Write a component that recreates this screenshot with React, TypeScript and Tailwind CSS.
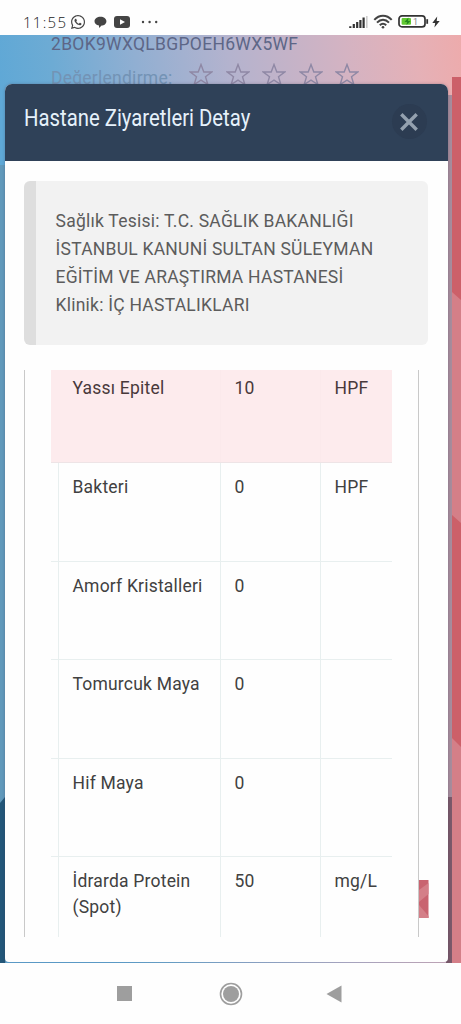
import { FaWhatsapp } from "react-icons/fa"

const results = [
  { id: 1, name: "Yassı Epitel", value: "10", unit: "HPF", abnormal: true },
  { id: 2, name: "Bakteri", value: "0", unit: "HPF" },
  { id: 3, name: "Amorf Kristalleri", value: "0", unit: "" },
  { id: 4, name: "Tomurcuk Maya", value: "0", unit: "" },
  { id: 5, name: "Hif Maya", value: "0", unit: "" },
  { id: 6, name: "İdrarda Protein (Spot)", value: "50", unit: "mg/L" },
]

function StatusBar() {
  return (
    <div className="flex h-[35px] shrink-0 items-start justify-between bg-[#fefefe] text-[#444]">
      <div className="flex items-center pt-[13px] pl-[23px]">
        <span className="w-[47px] font-['Open_Sans',sans-serif] text-[15px] leading-[18px] font-light tracking-[1.3px] text-[#222]">
          11:55
        </span>
        <FaWhatsapp className="h-4 w-4" />
        <svg className="ml-[8px] h-[13px] w-[13px]" viewBox="0 0 13 13">
          <path d="M6.5 0.8C9.8 0.8 12.4 2.7 12.4 5.2C12.4 8 10 9.6 7.6 9.6L5 12V9.4C2.2 9 .5 7.4 .5 5.2C.5 2.7 3.2 .8 6.5 .8Z" fill="#444" />
        </svg>
        <svg className="ml-[7px] h-[12px] w-[16px]" viewBox="0 0 16 12">
          <rect width="16" height="12" rx="3" fill="#444" />
          <path d="M6 3.2L11 6L6 8.8Z" fill="#fff" />
        </svg>
        <svg className="ml-[11px] h-[4px] w-[18px]" viewBox="0 0 18 4">
          <circle cx="2" cy="2" r="1.2" fill="#444" />
          <circle cx="8.6" cy="2" r="1.2" fill="#444" />
          <circle cx="15.2" cy="2" r="1.2" fill="#444" />
        </svg>
      </div>

      <div className="flex items-center pt-[14px] pr-[21px]">
        <svg className="h-[15px] w-[21px]" viewBox="0 0 21 15">
          <path d="M2.3 12.2V14M5.8 10V14M9.2 8V14M12.4 6V14M15.6 3.5V14" stroke="#333" strokeWidth="2.2" />
          <path d="M18.8 2V14" stroke="#ccc" strokeWidth="1.6" />
        </svg>
        <svg className="ml-[4px] h-[15px] w-[20px]" viewBox="0 0 20 15" fill="none" stroke="#444" strokeWidth="2">
          <path d="M1.3 5.8C6.3 .3 13.7 .3 18.7 5.8" />
          <path d="M4 8.6C7.6 4.7 12.4 4.7 16 8.6" />
          <path d="M6.8 11.3C8.9 9.1 11.1 9.1 13.2 11.3" />
          <circle cx="10" cy="13.2" r="1.3" fill="#444" stroke="none" />
        </svg>
        <svg className="ml-[5px] h-[15px] w-[31px]" viewBox="0 0 31 15">
          <rect x="1" y="1.9" width="26" height="11" rx="3" fill="#fff" stroke="#333" strokeWidth="1.7" />
          <path d="M29.2 5.2V9.8" stroke="#333" strokeWidth="1.8" />
          <rect x="3.6" y="4" width="9.4" height="6.8" rx="1" fill="#62c932" />
          <path d="M10.5 3.5L6.5 8H9L8.5 11L12.5 7H10Z" fill="#258a1f" />
          <text x="15" y="10.6" fontSize="9" fontFamily="Roboto, sans-serif" fill="#888">1</text>
        </svg>
        <svg className="ml-[3px] h-[12px] w-[8px]" viewBox="0 0 8 12">
          <path d="M5.2 .5L.3 7H3.2L2.4 11.6L7.7 4.9H4.7Z" fill="#333" />
        </svg>
      </div>
    </div>
  )
}

function Star() {
  return (
    <svg className="h-[24px] w-[24px]" viewBox="0 0 24 24" fill="none" stroke="#8f88a5" strokeWidth="1.4">
      <path d="M12 1.5L14.8 9H22.7L16.5 13.8L18.8 21.5L12 17.1L5.2 21.5L7.5 13.8L1.3 9H9.2Z" />
    </svg>
  )
}

// Tinted artwork of the page that stays visible at the edges of the dialog
function Backdrop() {
  return (
    <svg className="absolute inset-0 h-full w-full" viewBox="0 0 461 928" preserveAspectRatio="none">
      <defs>
        <linearGradient id="sky" gradientUnits="userSpaceOnUse" x1="0" y1="60" x2="461" y2="0">
          <stop offset="0" stopColor="#5fa8d6" />
          <stop offset="0.12" stopColor="#6dabd4" />
          <stop offset="0.3" stopColor="#91afd2" />
          <stop offset="0.5" stopColor="#b4b3ce" />
          <stop offset="0.75" stopColor="#d4b3c2" />
          <stop offset="0.9" stopColor="#e5b1b7" />
          <stop offset="1" stopColor="#edabac" />
        </linearGradient>
      </defs>
      <rect width="461" height="928" fill="url(#sky)" />
      <rect y="130" width="6" height="798" fill="#6199bb" />
      <path d="M0 768L5 762V928H0Z" fill="#235779" />
      <rect x="446" y="60" width="6" height="868" fill="#a68c9c" />
      <rect x="446" y="762" width="6" height="166" fill="#79596a" />
      <rect x="452" y="42" width="9" height="886" fill="#d47f88" />
      <path d="M452 42H461V265L452 257Z" fill="#cc6069" />
      <path d="M452 480L461 488V712L452 703Z" fill="#cc6069" />
    </svg>
  )
}

function DetailDialog() {
  return (
    <div className="absolute top-[49px] left-[5px] flex h-[878px] w-[442.5px] flex-col overflow-hidden rounded-t-[7px] rounded-b-[4px] bg-[#fefefe] shadow-[0_0_3px_rgba(60,50,80,0.35)]">
      <div className="flex h-[76.5px] shrink-0 items-start justify-between bg-[#2f4158] pr-[21px] pl-[19px]">
        <h1 className="mt-[20px] origin-left scale-x-[0.883] text-[23px] leading-[30px] whitespace-nowrap text-[#e6f1fb]">
          Hastane Ziyaretleri Detay
        </h1>
        <button className="mt-[20px] flex h-[35px] w-[35px] shrink-0 items-center justify-center rounded-full bg-[#2c3c52]">
          <svg className="h-[18px] w-[18px]" viewBox="0 0 18 18" stroke="#94a1af" strokeWidth="3.4">
            <path d="M1.3 1.3L16.7 16.7M16.7 1.3L1.3 16.7" />
          </svg>
        </button>
      </div>

      <div className="mt-[20.5px] ml-[18.5px] h-[164px] w-[404.5px] shrink-0 rounded-[6px] border-l-[12.5px] border-[#dedede] bg-[#f2f2f2] pt-[26px] pl-[20px] text-[17.5px] leading-[28.1px] tracking-[0.24px] whitespace-nowrap text-[#5c5c5c]">
        <p>Sağlık Tesisi: T.C. SAĞLIK BAKANLIĞI</p>
        <p>İSTANBUL KANUNİ SULTAN SÜLEYMAN</p>
        <p>EĞİTİM VE ARAŞTIRMA HASTANESİ</p>
        <p>Klinik: İÇ HASTALIKLARI</p>
      </div>

      <div className="mt-[25px] flex h-[567px] shrink-0 pl-[19px]">
        <div className="w-[395px] overflow-hidden border-x border-[#c9c9c9] pl-[26px]">
          <div className="w-[341px]">
            {results.map((row) => (
              <div
                key={row.id}
                className={
                  row.abnormal
                    ? "flex h-[93px] border-b border-[#eee4e6] bg-[#fdebed] text-[#49393b]"
                    : "flex h-[98.6px] border-b border-[#e8efef] text-[#414141]"
                }
              >
                <div className={row.abnormal ? "w-[8px] border-r border-[#fdebed]" : "w-[8px] border-r border-[#e8efef]"} />
                <div className={row.abnormal ? "w-[162px] border-r border-[#fbe9eb] pt-[5px] pl-[13.5px]" : "w-[162px] border-r border-[#e8efef] pt-[11px] pl-[13.5px]"}>
                  <p className="w-[136px] text-[17.5px] leading-[26px] tracking-[0.2px]">{row.name}</p>
                </div>
                <div className={row.abnormal ? "w-[100px] border-r border-[#fbe9eb] pt-[5px] pl-[13.5px]" : "w-[100px] border-r border-[#e8efef] pt-[11px] pl-[13.5px]"}>
                  <p className="text-[17.5px] leading-[26px] tracking-[0.2px]">{row.value}</p>
                </div>
                <div className={row.abnormal ? "pt-[5px] pl-[13.5px]" : "pt-[11px] pl-[13.5px]"}>
                  <p className="text-[17.5px] leading-[26px] tracking-[0.2px]">{row.unit}</p>
                </div>
              </div>
            ))}
          </div>
        </div>
        <svg className="mt-[510px] h-[38px] w-[9.5px]" viewBox="0 0 9.5 38" preserveAspectRatio="none">
          <rect width="9.5" height="38" fill="#c96470" />
          <path d="M0 10L9.5 3V14L0 22Z" fill="#d47f88" />
          <path d="M0 25L9.5 36V38H0Z" fill="#d47f88" />
        </svg>
      </div>
    </div>
  )
}

function NavBar() {
  return (
    <div className="flex h-[61px] shrink-0 items-center bg-[#fefefe] pl-[117px]">
      <div className="h-[15px] w-[15px] bg-[#9e9e9e]" />
      <svg className="ml-[87px] h-[24px] w-[24px]" viewBox="0 0 24 24">
        <circle cx="12" cy="12" r="10.5" fill="none" stroke="#9e9e9e" strokeWidth="1.6" />
        <circle cx="12" cy="12" r="8" fill="#9e9e9e" />
      </svg>
      <svg className="ml-[83px] h-[18px] w-[16px]" viewBox="0 0 16 18">
        <path d="M.5 9L15.5 .5V17.5Z" fill="#9e9e9e" />
      </svg>
    </div>
  )
}

export default function App() {
  return (
    <div className="flex h-[1024px] w-[461px] flex-col overflow-hidden bg-[#fefefe] font-[Roboto,sans-serif]">
      <StatusBar />
      <div className="relative h-[928px] shrink-0 overflow-hidden">
        <Backdrop />
        <div className="relative pl-[51px]">
          <p className="h-[28px] text-[17.5px] leading-[19px] tracking-[0.3px] text-[#5d6687]">2BOK9WXQLBGPOEH6WX5WF</p>
          <div className="flex items-start">
            <p className="w-[138px] pt-[2px] text-[17.5px] leading-[26px] tracking-[0.25px] text-[#7393b5]">Değerlendirme:</p>
            <div className="flex gap-[12.6px]">
              {[1, 2, 3, 4, 5].map((n) => (
                <Star key={n} />
              ))}
            </div>
          </div>
        </div>
        <DetailDialog />
      </div>
      <NavBar />
    </div>
  )
}
